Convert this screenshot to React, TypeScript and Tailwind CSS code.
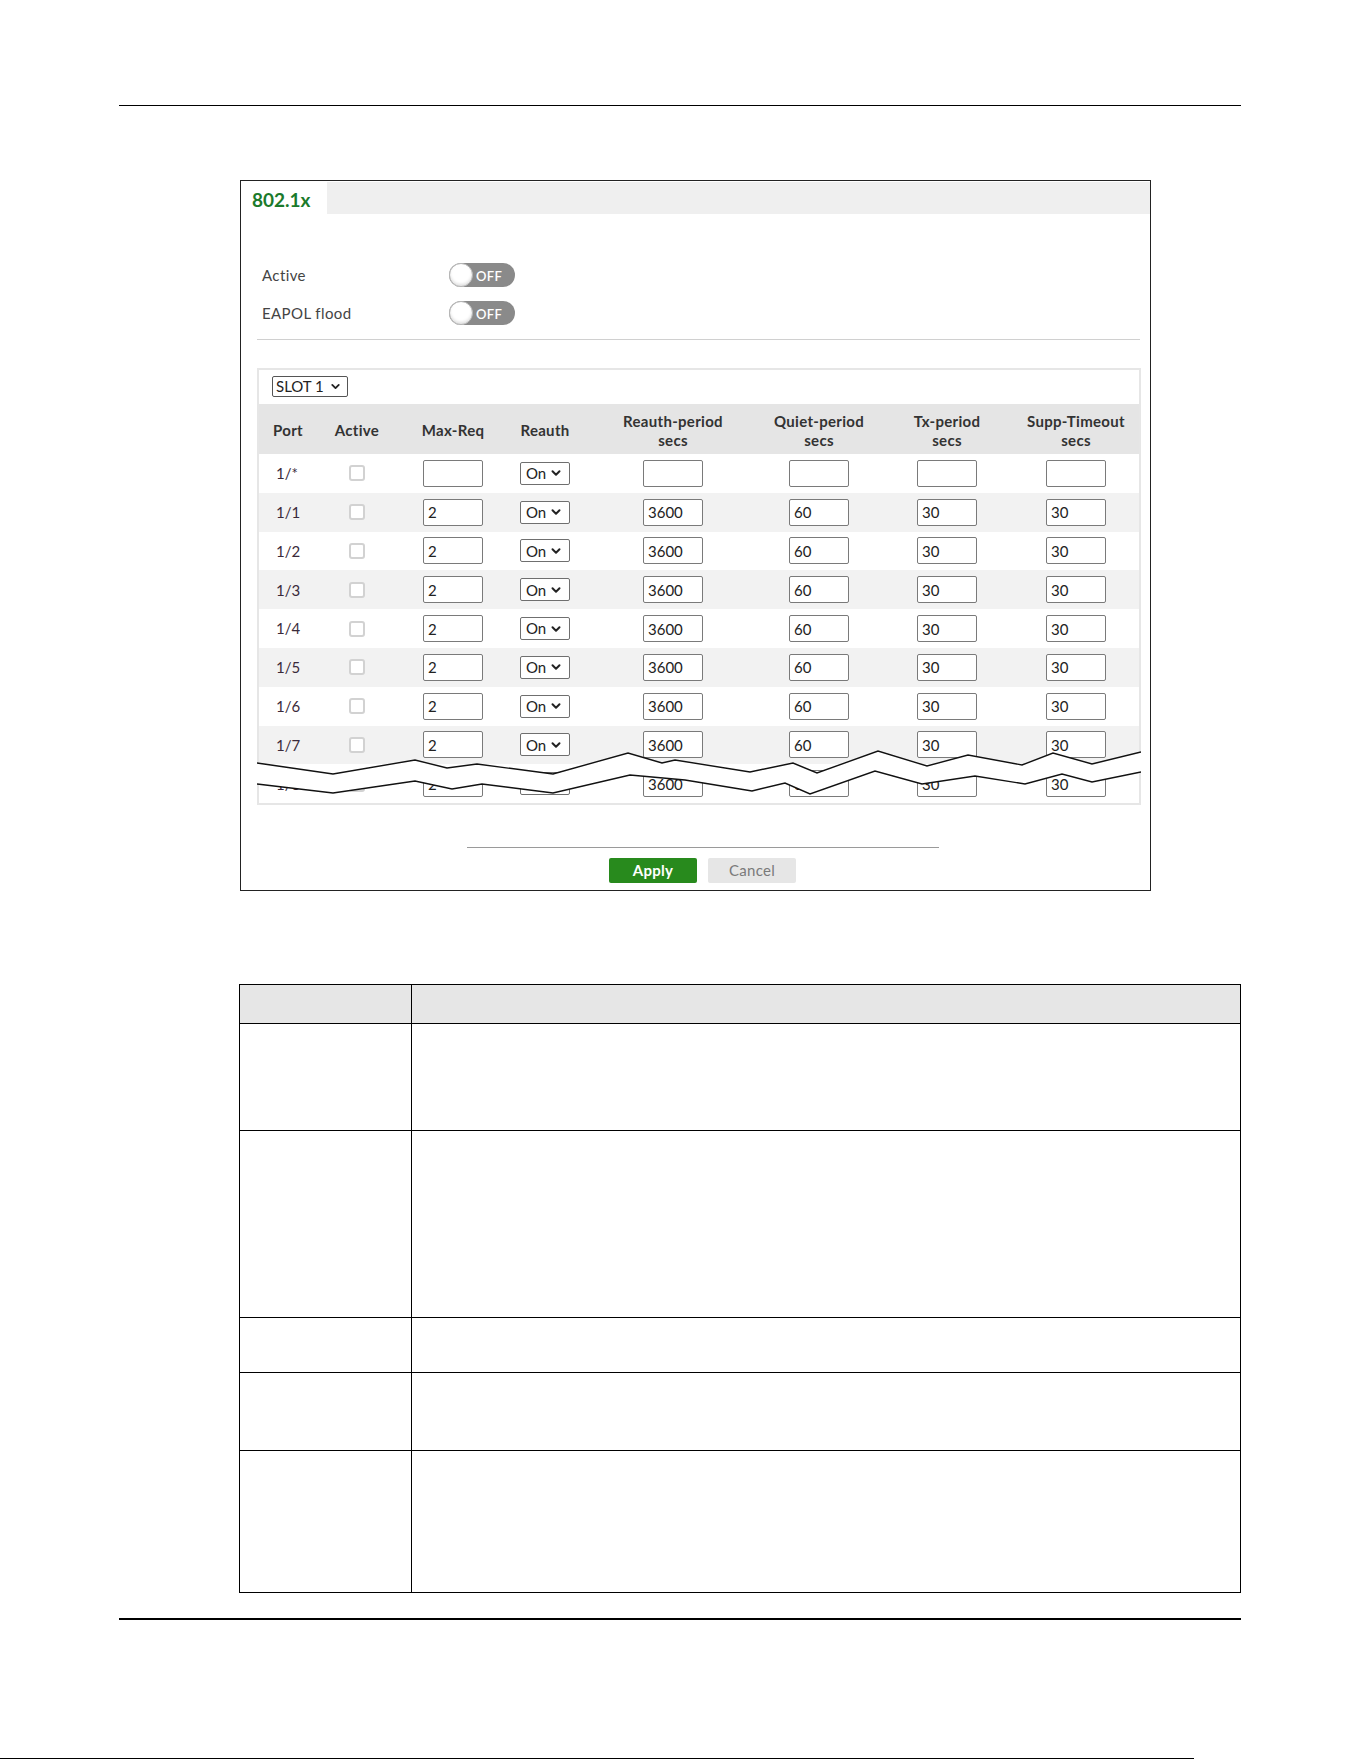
import { ChevronDown } from "lucide-react";

type Row = {
  port: string;
  maxReq: string;
  reauthPeriod: string;
  quiet: string;
  tx: string;
  supp: string;
};

const rows: Row[] = [
  { port: "1/*", maxReq: "", reauthPeriod: "", quiet: "", tx: "", supp: "" },
  ...["1/1", "1/2", "1/3", "1/4", "1/5", "1/6", "1/7", "1/8"].map((port) => ({
    port,
    maxReq: "2",
    reauthPeriod: "3600",
    quiet: "60",
    tx: "30",
    supp: "30",
  })),
];

// column template shared by header and body rows
const cols = "grid grid-cols-[50px_96px_96px_88px_168px_124px_132px_126px]";

// break marks drawn across the port table (page coordinates)
const upper = [
  [257, 762], [333, 773], [415, 759], [447, 767], [477, 763], [553, 773],
  [628, 752], [662, 762], [675, 759], [750, 771], [793, 762], [817, 772],
  [878, 750], [927, 765], [968, 754], [1022, 764], [1053, 752], [1092, 763],
  [1141, 751],
];
const lower = [
  [257, 783], [333, 792], [415, 780], [452, 788], [482, 783], [553, 792],
  [630, 774], [685, 779], [752, 790], [785, 782], [810, 793], [875, 770],
  [922, 783], [975, 775], [1025, 783], [1062, 773], [1092, 781], [1141, 771],
];
const pts = (list: number[][]) => list.map(([x, y]) => `${x},${y}`).join(" ");

function Toggle() {
  return (
    <div className="relative w-[66px] h-[24px] rounded-full bg-[#8a8a8a] flex items-center">
      <div className="absolute left-0 top-0 w-[24px] h-[24px] rounded-full bg-white border border-[#b5b5b5] shadow-[inset_0_-2px_3px_rgba(0,0,0,0.12)]" />
      <span className="ml-[27px] mt-[3px] leading-none text-[13px] font-semibold text-white tracking-[0.3px]">OFF</span>
    </div>
  );
}

function Field({ value }: { value: string }) {
  return (
    <input
      readOnly
      value={value}
      className="w-[60px] h-[27px] border border-[#7a7a7a] rounded-[2px] bg-white px-[4px] text-[15px] text-[#222] outline-none font-['Lato',sans-serif]"
    />
  );
}

function OnSelect() {
  return (
    <div className="w-[50px] h-[23px] border border-[#6f6f6f] rounded-[2px] bg-white flex items-center pl-[5px] gap-[3px] text-[15px] text-[#222]">
      <span>On</span>
      <ChevronDown size={14} strokeWidth={3.4} className="text-[#222]" />
    </div>
  );
}

function Check() {
  return <div className="w-[16px] h-[16px] rounded-[3px] border-2 border-[#d2d2d2] bg-white" />;
}

function Head({ top, sub }: { top: string; sub?: string }) {
  return (
    <div className="flex flex-col items-center justify-center leading-[19px] text-[15px] font-bold text-[#333] tracking-[0.3px]">
      <span>{top}</span>
      {sub && <span>{sub}</span>}
    </div>
  );
}

const descRows = [107, 187, 55, 78, 141];

export default function App() {
  return (
    <div className="relative w-[1361px] min-h-[1761px] bg-white font-['Lato',sans-serif]">
      {/* running header rule */}
      <div className="pt-[105px] pl-[119px]">
        <div className="w-[1122px] h-px bg-black" />
      </div>

      {/* 802.1x panel */}
      <div className="ml-[240px] mt-[74px] w-[911px] border border-[#222] flex flex-col pb-[7px]">
        <div className="flex h-[33px]">
          <div className="w-[86px] pl-[11px] pt-[5px] flex items-center text-[19px] font-bold text-[#1b7a2b]">802.1x</div>
          <div className="flex-1 bg-[#efefef] mt-px" />
        </div>

        <div className="pl-[21px] pt-[49px] flex flex-col gap-[14px]">
          <div className="flex items-center h-[24px]">
            <span className="w-[187px] text-[15px] text-[#444] tracking-[0.4px]">Active</span>
            <Toggle />
          </div>
          <div className="flex items-center h-[24px]">
            <span className="w-[187px] text-[15px] text-[#444] tracking-[0.4px]">EAPOL flood</span>
            <Toggle />
          </div>
        </div>

        <div className="mt-[14px] ml-[16px] mr-[10px] h-px bg-[#d0d0d0]" />

        {/* port table */}
        <div className="relative mt-[28px] ml-[16px] mr-[9px] border-2 border-[#e6e6e6]">
          <div className="pt-[6px] pl-[13px]">
            <div className="w-[76px] h-[21px] border border-[#555] rounded-[2px] flex items-center pl-[3px] gap-[5px] text-[15px] text-[#222] whitespace-nowrap">
              <span>SLOT 1</span>
              <ChevronDown size={13} strokeWidth={3.4} />
            </div>
          </div>

          <div className={`${cols} mt-[7px] h-[50px] pt-[3px] bg-[#e5e5e5]`}>
            <div className="flex items-center pl-[14px] text-[15px] font-bold text-[#333] tracking-[0.3px]">Port</div>
            <Head top="Active" />
            <Head top="Max-Req" />
            <Head top="Reauth" />
            <Head top="Reauth-period" sub="secs" />
            <Head top="Quiet-period" sub="secs" />
            <Head top="Tx-period" sub="secs" />
            <Head top="Supp-Timeout" sub="secs" />
          </div>

          {rows.map((r, i) => (
            <div key={r.port} className={`${cols} h-[38.8px] ${i % 2 === 1 ? "bg-[#f2f2f2]" : "bg-white"}`}>
              <div className="flex items-center pl-[17px] text-[15px] text-[#3a2a3a]">{r.port}</div>
              <div className="flex items-center justify-center"><Check /></div>
              <div className="flex items-center justify-center"><Field value={r.maxReq} /></div>
              <div className="flex items-center justify-center"><OnSelect /></div>
              <div className="flex items-center justify-center"><Field value={r.reauthPeriod} /></div>
              <div className="flex items-center justify-center"><Field value={r.quiet} /></div>
              <div className="flex items-center justify-center"><Field value={r.tx} /></div>
              <div className="flex items-center justify-center"><Field value={r.supp} /></div>
            </div>
          ))}

          <svg
            className="absolute -left-[2px] -top-[2px] pointer-events-none"
            width={884}
            height={437}
            viewBox="257 367 884 437"
          >
            <polygon points={pts([...upper, ...[...lower].reverse()])} fill="white" />
            <polyline points={pts(upper)} fill="none" stroke="#111" strokeWidth={1.4} />
            <polyline points={pts(lower)} fill="none" stroke="#111" strokeWidth={1.4} />
          </svg>
        </div>

        <div className="mt-[42px] ml-[226px] w-[472px] h-px bg-[#9a9a9a]" />

        <div className="mt-[10px] pl-[368px] flex gap-[11px]">
          <button className="w-[88px] h-[25px] rounded-[2px] bg-[#288a1d] text-white text-[15px] font-bold tracking-[0.3px]">Apply</button>
          <button className="w-[88px] h-[25px] rounded-[2px] bg-[#e6e6e6] text-[#7a7a7a] text-[15px] tracking-[0.3px]">Cancel</button>
        </div>
      </div>

      {/* field description table */}
      <div className="ml-[239px] mt-[93px] w-[1002px] border-[1.5px] border-black">
        <div className="flex h-[39px] bg-[#e6e6e6] border-b-[1.5px] border-black">
          <div className="w-[172px] border-r border-black" />
          <div className="flex-1" />
        </div>
        {descRows.map((h, i) => (
          <div
            key={i}
            style={{ height: h }}
            className={`flex ${i < descRows.length - 1 ? "border-b border-black" : ""}`}
          >
            <div className="w-[172px] border-r border-black" />
            <div className="flex-1" />
          </div>
        ))}
      </div>

      {/* running footer rule */}
      <div className="ml-[119px] mt-[25px] w-[1122px] h-[2px] bg-black" />

      <div className="mt-[138px] w-[1194px] h-px bg-black" />
    </div>
  );
}
